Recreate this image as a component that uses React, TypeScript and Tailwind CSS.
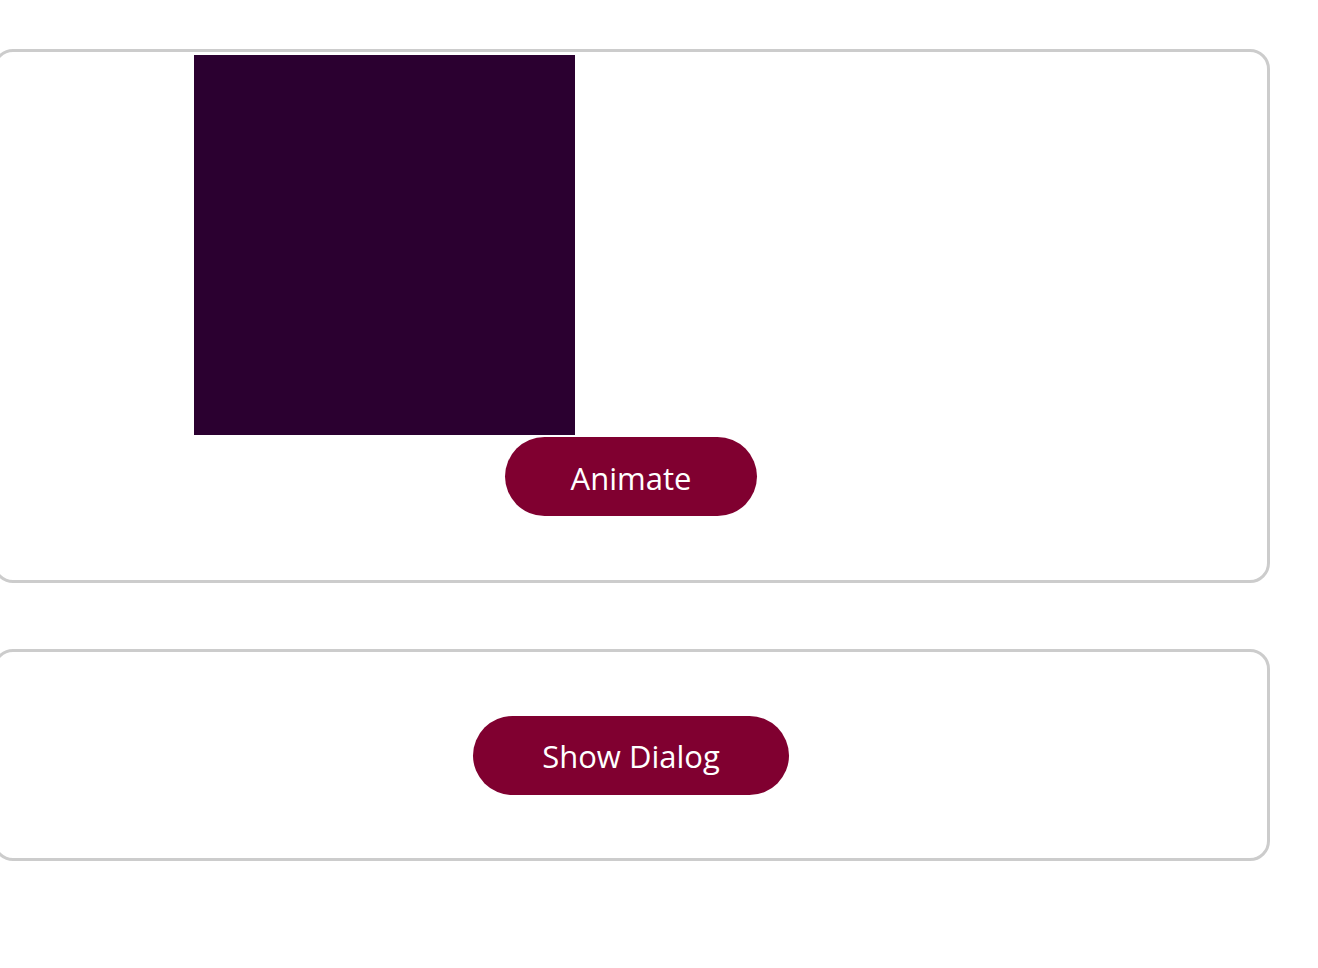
export default function App() {
  return (
    <div className="min-h-[968px] overflow-hidden bg-white pt-[49px] font-['Open_Sans','Noto_Sans',sans-serif]">
      {/* animation card */}
      <div className="ml-[-7px] flex h-[534px] w-[1277px] flex-col rounded-[20px] border-[3px] border-[#cccccc]">
        <div className="ml-[198px] mt-[3px] h-[380px] w-[381px] bg-[#2b0030]" />
        <button className="mt-[2px] ml-[-1px] flex h-[79px] w-[252px] items-center justify-center self-center rounded-full bg-[#800030] pt-[3px] text-[31px] text-white">
          Animate
        </button>
      </div>

      {/* dialog card */}
      <div className="ml-[-7px] mt-[66px] flex h-[212px] w-[1277px] items-center justify-center rounded-[20px] border-[3px] border-[#cccccc]">
        <button className="ml-[-1px] flex h-[79px] w-[316px] items-center justify-center rounded-full bg-[#800030] pt-[3px] text-[31px] text-white">
          Show Dialog
        </button>
      </div>
    </div>
  );
}
